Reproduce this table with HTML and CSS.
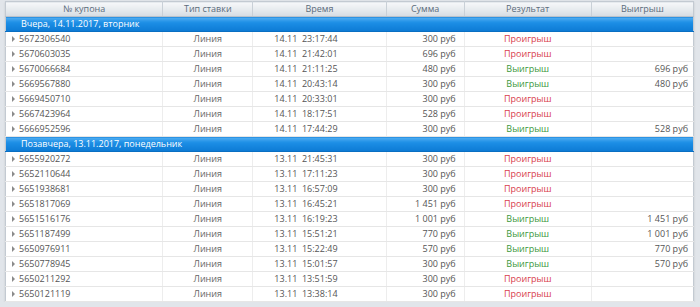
FILE: index.html
```html
<!DOCTYPE html>
<html lang="ru">
<head>
<meta charset="utf-8">
<link rel="stylesheet" href="styles.css">
</head>
<body>
<div class="frame">
<table class="bets">
<colgroup>
<col class="c1"><col class="c2"><col class="c3"><col class="c4"><col class="c5"><col class="c6">
</colgroup>
<thead>
<tr><th>№ купона</th><th>Тип ставки</th><th>Время</th><th>Сумма</th><th>Результат</th><th>Выигрыш</th></tr>
</thead>
<tbody>
<tr class="group"><td colspan="6">Вчера, 14.11.2017, вторник</td></tr>
<tr><td class="num"><span class="arr"></span>5672306540</td><td class="type">Линия</td><td class="time">14.11&nbsp; 23:17:44</td><td class="sum">300 руб</td><td class="res lose">Проигрыш</td><td class="win"></td></tr>
<tr><td class="num"><span class="arr"></span>5670603035</td><td class="type">Линия</td><td class="time">14.11&nbsp; 21:42:01</td><td class="sum">696 руб</td><td class="res lose">Проигрыш</td><td class="win"></td></tr>
<tr><td class="num"><span class="arr"></span>5670066684</td><td class="type">Линия</td><td class="time">14.11&nbsp; 21:11:25</td><td class="sum">480 руб</td><td class="res won">Выигрыш</td><td class="win">696 руб</td></tr>
<tr><td class="num"><span class="arr"></span>5669567880</td><td class="type">Линия</td><td class="time">14.11&nbsp; 20:43:14</td><td class="sum">300 руб</td><td class="res won">Выигрыш</td><td class="win">480 руб</td></tr>
<tr><td class="num"><span class="arr"></span>5669450710</td><td class="type">Линия</td><td class="time">14.11&nbsp; 20:33:01</td><td class="sum">300 руб</td><td class="res lose">Проигрыш</td><td class="win"></td></tr>
<tr><td class="num"><span class="arr"></span>5667423964</td><td class="type">Линия</td><td class="time">14.11&nbsp; 18:17:51</td><td class="sum">528 руб</td><td class="res lose">Проигрыш</td><td class="win"></td></tr>
<tr><td class="num"><span class="arr"></span>5666952596</td><td class="type">Линия</td><td class="time">14.11&nbsp; 17:44:29</td><td class="sum">300 руб</td><td class="res won">Выигрыш</td><td class="win">528 руб</td></tr>
<tr class="group"><td colspan="6">Позавчера, 13.11.2017, понедельник</td></tr>
<tr><td class="num"><span class="arr"></span>5655920272</td><td class="type">Линия</td><td class="time">13.11&nbsp; 21:45:31</td><td class="sum">300 руб</td><td class="res lose">Проигрыш</td><td class="win"></td></tr>
<tr><td class="num"><span class="arr"></span>5652110644</td><td class="type">Линия</td><td class="time">13.11&nbsp; 17:11:23</td><td class="sum">300 руб</td><td class="res lose">Проигрыш</td><td class="win"></td></tr>
<tr><td class="num"><span class="arr"></span>5651938681</td><td class="type">Линия</td><td class="time">13.11&nbsp; 16:57:09</td><td class="sum">300 руб</td><td class="res lose">Проигрыш</td><td class="win"></td></tr>
<tr><td class="num"><span class="arr"></span>5651817069</td><td class="type">Линия</td><td class="time">13.11&nbsp; 16:45:21</td><td class="sum">1 451 руб</td><td class="res lose">Проигрыш</td><td class="win"></td></tr>
<tr><td class="num"><span class="arr"></span>5651516176</td><td class="type">Линия</td><td class="time">13.11&nbsp; 16:19:23</td><td class="sum">1 001 руб</td><td class="res won">Выигрыш</td><td class="win">1 451 руб</td></tr>
<tr><td class="num"><span class="arr"></span>5651187499</td><td class="type">Линия</td><td class="time">13.11&nbsp; 15:51:21</td><td class="sum">770 руб</td><td class="res won">Выигрыш</td><td class="win">1 001 руб</td></tr>
<tr><td class="num"><span class="arr"></span>5650976911</td><td class="type">Линия</td><td class="time">13.11&nbsp; 15:22:49</td><td class="sum">570 руб</td><td class="res won">Выигрыш</td><td class="win">770 руб</td></tr>
<tr><td class="num"><span class="arr"></span>5650778945</td><td class="type">Линия</td><td class="time">13.11&nbsp; 15:01:57</td><td class="sum">300 руб</td><td class="res won">Выигрыш</td><td class="win">570 руб</td></tr>
<tr><td class="num"><span class="arr"></span>5650211292</td><td class="type">Линия</td><td class="time">13.11&nbsp; 13:51:59</td><td class="sum">300 руб</td><td class="res lose">Проигрыш</td><td class="win"></td></tr>
<tr><td class="num"><span class="arr"></span>5650121119</td><td class="type">Линия</td><td class="time">13.11&nbsp; 13:38:14</td><td class="sum">300 руб</td><td class="res lose">Проигрыш</td><td class="win"></td></tr>
</tbody>
</table>
</div>
</body>
</html>
```
FILE: styles.css
```css
html, body {
  margin: 0;
  padding: 0;
  background: #e1e5ea;
  font-family: "Open Sans", "DejaVu Sans", sans-serif;
  font-size: 9px;
  color: #555;
}
.frame {
  padding: 1px 0 0 5px;
  width: 689px;
}
.bets {
  width: 689px;
  border-collapse: collapse;
  table-layout: fixed;
  background: #fff;
  border: 1px solid #c3cad2;
  box-shadow: 0 1px 2px rgba(0,0,0,0.12);
}
.c1 { width: 157px; }
.c2 { width: 90px; }
.c3 { width: 133px; }
.c4 { width: 78px; }
.c5 { width: 127px; }
.c6 { width: 102px; }
th {
  height: 14px;
  padding: 0;
  font-weight: normal;
  color: #5b6c7c;
  text-align: center;
  background: linear-gradient(#f6f8fa, #e4e8ec 60%, #d6dce2);
  border-right: 1px solid #c9d0d7;
  border-bottom: 1px solid #b9c2cb;
  line-height: 14px;
}
th:last-child { border-right: none; }
td {
  height: 14px;
  padding: 0;
  line-height: 14px;
  border-bottom: 1px solid #e6e6e6;
  border-right: 1px solid #ededed;
  white-space: nowrap;
  overflow: hidden;
}
td:last-child { border-right: none; }
.group td {
  color: #fff;
  padding-left: 15px;
  background: linear-gradient(#52aef2, #1d8fe6 35%, #0c7ad4);
  border-bottom: 1px solid #0a6fc2;
}
.num {
  padding-left: 6px;
  color: #555;
}
.arr {
  display: inline-block;
  width: 0;
  height: 0;
  border-left: 3px solid #8a8a8a;
  border-top: 3px solid transparent;
  border-bottom: 3px solid transparent;
  margin-right: 4px;
  vertical-align: 0;
}
.type { text-align: center; color: #666; }
.time { padding-left: 21px; }
.sum { text-align: right; padding-right: 8px; }
.res { text-align: center; }
.lose { color: #d8404c; }
.won { color: #3c983c; }
.win { text-align: right; padding-right: 5px; }
```
